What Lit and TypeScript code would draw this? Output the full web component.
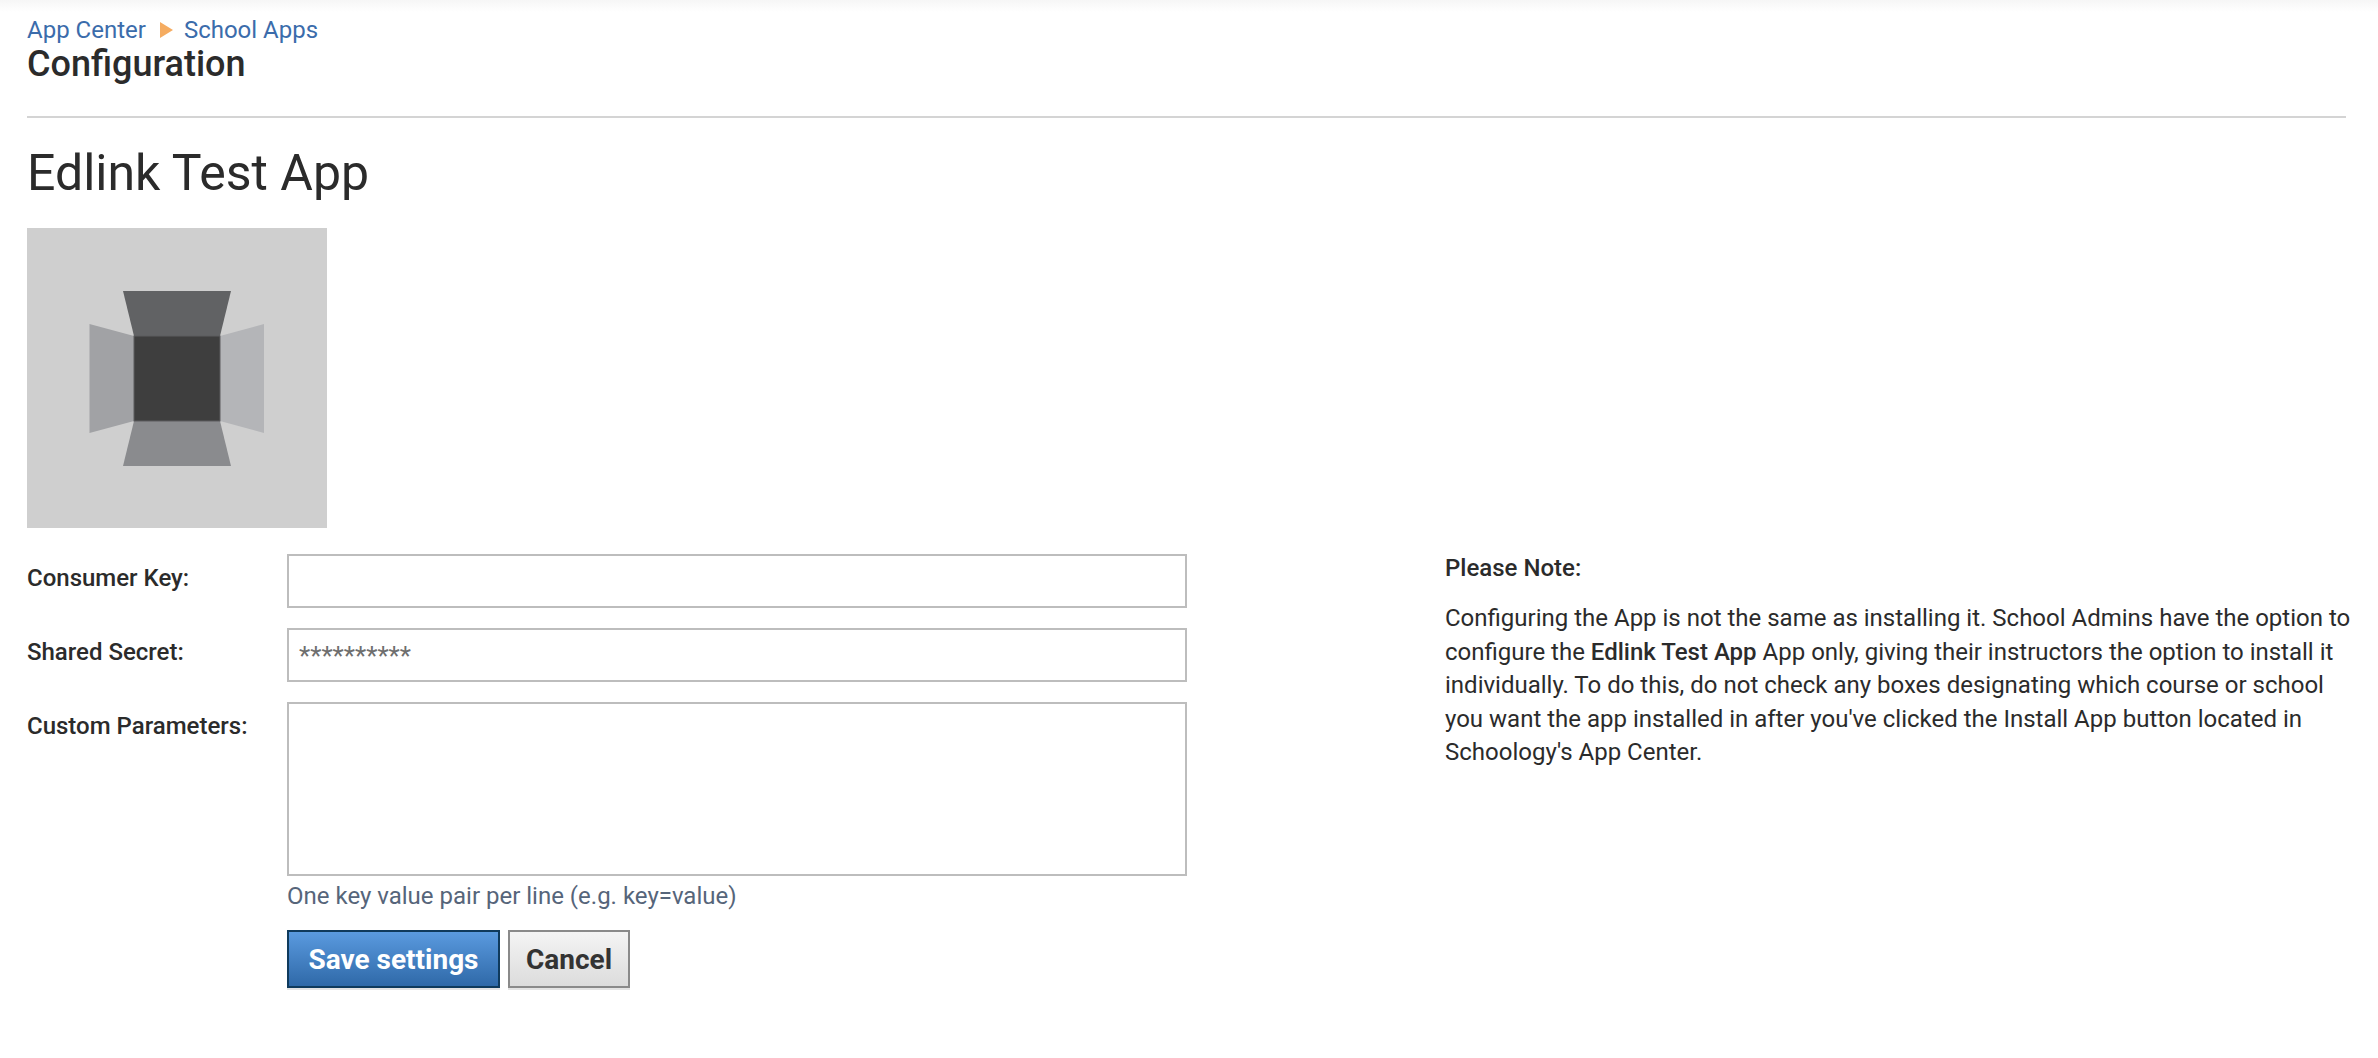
import { LitElement, html, css } from "lit";
import { customElement } from "lit/decorators.js";

@customElement("app-root")
export class AppRoot extends LitElement {
  static styles = css`
    :host { display: block; min-height: 1058px; background: #fff; font-family: Roboto, "Liberation Sans", sans-serif; color: #2b2b2b; box-sizing: border-box; overflow: hidden; }
    * { box-sizing: border-box; }
    .topshade { height: 12px; background: linear-gradient(#f6f6f6, #fff); }
    .page { padding: 0 32px 0 27px; }
    .crumbs { display: flex; align-items: center; height: 30px; font-size: 24px; color: #3b6cab; margin-top: 3px; }
    .crumbs a { color: inherit; text-decoration: none; }
    .arrow { width: 0; height: 0; border-left: 13px solid #f5ac61; border-top: 8px solid transparent; border-bottom: 8px solid transparent; margin: 0 11px 0 14px; }
    .section { font-size: 36px; font-weight: 500; line-height: 40px; margin: -1px 0 0; color: #2b2b2b; }
    .rule { height: 2px; background: #d4d4d4; margin-top: 32px; }
    .title { font-size: 50px; font-weight: 400; line-height: 56px; margin: 27px 0 0; color: #2b2b2b; }
    .logo { display: block; width: 300px; height: 300px; margin-top: 27px; }
    .main { display: flex; margin-top: 26px; }
    .form { width: 1160px; flex: none; }
    .row { display: flex; margin-bottom: 20px; }
    .row label { width: 260px; flex: none; font-size: 24px; font-weight: 500; padding-top: 10px; line-height: 28px; }
    .field { width: 900px; flex: none; height: 54px; border: 2px solid #bdbdbd; background: #fff; font-size: 26px; color: #6e6e6e; padding: 1px 10px 0; line-height: 50px; }
    .area { height: 174px; }
    .hint { margin: -16px 0 0 260px; font-size: 24px; line-height: 32px; color: #56657a; }
    .actions { display: flex; gap: 8px; margin: 18px 0 0 260px; }
    .btn { height: 58px; border: 2px solid; font-family: inherit; font-size: 28px; font-weight: 700; padding: 0; box-shadow: 0 2px 0 #e4e4e4; }
    .save { width: 213px; color: #fff; border-color: #0f3a5c; background: linear-gradient(#5a9adf, #2f69a8); }
    .cancel { width: 122px; color: #333; border-color: #8a8a8a; background: linear-gradient(#f4f4f4, #dcdcdc); }
    .note { flex: none; margin: -1px 0 0 258px; width: 915px; font-size: 24px; line-height: 33.6px; color: #2b2b2b; }
    .note h3 { font-size: 24px; font-weight: 500; margin: 0; line-height: 30px; }
    .note p { margin: 19px 0 0; }
    .note b { font-weight: 500; }
  `;
  render() {
    return html`
      <div class="topshade"></div>
      <div class="page">
        <nav class="crumbs"><a href="#">App Center</a><span class="arrow"></span><a href="#">School Apps</a></nav>
        <h2 class="section">Configuration</h2>
        <div class="rule"></div>
        <h1 class="title">Edlink Test App</h1>
        <svg class="logo" viewBox="0 0 300 300" aria-hidden="true">
          <rect width="300" height="300" fill="#cfcfcf"/>
          <polygon points="96,63 204,63 193,108 107,108" fill="#616264"/>
          <polygon points="62.5,96 107,108 107,193 62.5,205" fill="#a1a2a5"/>
          <polygon points="193,108 237,96 237,205 193,193" fill="#b4b5b8"/>
          <polygon points="107,193 193,193 204,238 96,238" fill="#8a8b8e"/>
          <rect x="107" y="108" width="86" height="85" fill="#3e3e3e" stroke="#5c5d5f" stroke-width="1"/>
        </svg>
        <div class="main">
          <div class="form">
            <div class="row"><label>Consumer Key:</label><div class="field"></div></div>
            <div class="row"><label>Shared Secret:</label><div class="field">**********</div></div>
            <div class="row"><label>Custom Parameters:</label><div class="field area"></div></div>
            <div class="hint">One key value pair per line (e.g. key=value)</div>
            <div class="actions">
              <button class="btn save">Save settings</button>
              <button class="btn cancel">Cancel</button>
            </div>
          </div>
          <aside class="note">
            <h3>Please Note:</h3>
            <p>Configuring the App is not the same as installing it. School Admins have the option to configure the <b>Edlink Test App</b> App only, giving their instructors the option to install it individually. To do this, do not check any boxes designating which course or school you want the app installed in after you've clicked the Install App button located in Schoology's App Center.</p>
          </aside>
        </div>
      </div>
    `;
  }
}
